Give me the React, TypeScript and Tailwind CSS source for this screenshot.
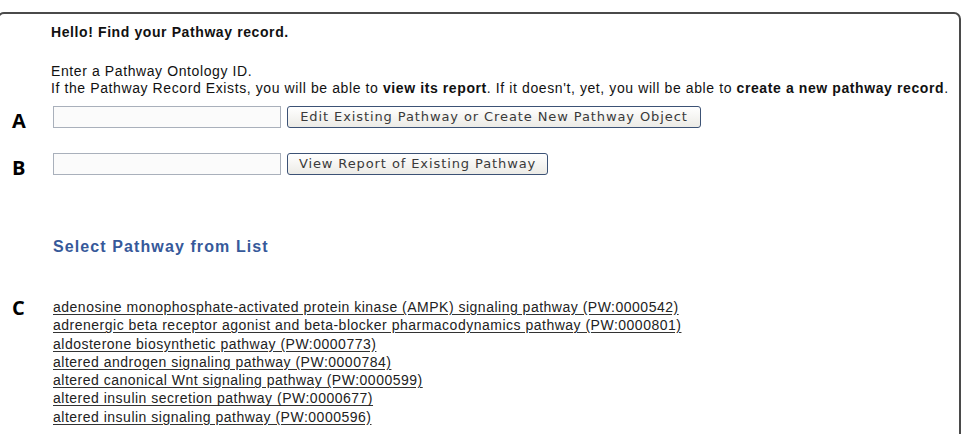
import React from 'react';

const pathways = [
  'adenosine monophosphate-activated protein kinase (AMPK) signaling pathway (PW:0000542)',
  'adrenergic beta receptor agonist and beta-blocker pharmacodynamics pathway (PW:0000801)',
  'aldosterone biosynthetic pathway (PW:0000773)',
  'altered androgen signaling pathway (PW:0000784)',
  'altered canonical Wnt signaling pathway (PW:0000599)',
  'altered insulin secretion pathway (PW:0000677)',
  'altered insulin signaling pathway (PW:0000596)',
];

const Label = ({ children, className }: { children: string; className?: string }) => (
  <div
    className={`w-[54px] shrink-0 pl-[13px] text-[20px] font-bold leading-[20px] text-black ${className ?? ''}`}
    style={{ fontFamily: '"Open Sans", "Liberation Sans", sans-serif' }}
  >
    {children}
  </div>
);

const LookupRow = ({ label, action, buttonWidth }: { label: string; action: string; buttonWidth: string }) => (
  <div className="flex h-[22px] items-start">
    <Label className="mt-[5px]">{label}</Label>
    <input
      type="text"
      className="h-[22px] w-[228px] border border-[#a9b0bb] bg-[#fbfbfb] outline-none"
    />
    <button
      className={`ml-[6px] h-[22px] ${buttonWidth} rounded-[3px] border border-[#3c5275] bg-gradient-to-b from-white to-[#ecebe6] text-[13px] leading-[20px] tracking-[0.9px] text-[#3a3a3a]`}
      style={{ fontFamily: '"DejaVu Sans", Verdana, sans-serif' }}
    >
      {action}
    </button>
  </div>
);

export default function App() {
  return (
    <div
      className="h-[434px] w-[963px] overflow-hidden bg-white pt-[12px] text-[#111]"
      style={{ fontFamily: '"Liberation Sans", Arial, sans-serif' }}
    >
      <div className="ml-[-3px] h-[440px] w-[964px] rounded-[7px] border-2 border-[#4a4a4a] bg-white">
        {/* Intro */}
        <div className="pl-[52px] pt-[10px]">
          <h1 className="text-[14px] font-bold leading-[17px] tracking-[0.6px]">Hello! Find your Pathway record.</h1>
          <p className="mt-[22px] text-[14px] leading-[17px] tracking-[0.6px]">
            Enter a Pathway Ontology ID.
            <br />
            If the Pathway Record Exists, you will be able to <b>view its report</b>. If it doesn't, yet, you
            will be able to <b>create a new pathway record</b>.
          </p>
        </div>

        {/* Lookup forms */}
        <div className="mt-[9px] flex flex-col gap-[25px]">
          <LookupRow label="A" action="Edit Existing Pathway or Create New Pathway Object" buttonWidth="w-[414px]" />
          <LookupRow label="B" action="View Report of Existing Pathway" buttonWidth="w-[261px]" />
        </div>

        {/* Pathway list */}
        <h2 className="mt-[63px] pl-[54px] text-[16px] font-bold leading-[18px] tracking-[1.1px] text-[#36599a]">
          Select Pathway from List
        </h2>
        <div className="mt-[42px] flex items-start">
          <Label>C</Label>
          <ul className="text-[14px] leading-[18.3px] tracking-[0.5px] text-[#222]">
            {pathways.map(p => (
              <li key={p}>
                <a href="#" className="underline decoration-[#333] underline-offset-[2px]">
                  {p}
                </a>
              </li>
            ))}
          </ul>
        </div>
      </div>
    </div>
  );
}
